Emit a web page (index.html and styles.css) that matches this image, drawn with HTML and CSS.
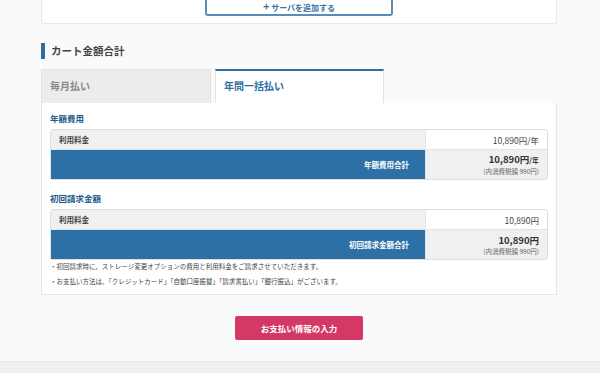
FILE: index.html
```html
<!DOCTYPE html>
<html>
<head>
  <title>カート</title>
  <link rel="stylesheet" href="styles.css">
</head>
<body>
  <div class="page">
    <div class="container">
      <div class="server-card">
        <button class="add-btn"><span class="plus">+</span> サーバを追加する</button>
      </div>

      <h2 class="section-title">カート金額合計</h2>

      <div class="tabs">
        <div class="tab">毎月払い</div>
        <div class="tab active">年間一括払い</div>
      </div>
      <div class="panel">
        <h3 class="sub-title">年額費用</h3>
        <table class="price">
          <tr>
            <th>利用料金</th>
            <td>10,890円/年</td>
          </tr>
          <tr class="total">
            <th>年額費用合計</th>
            <td><b>10,890円<small>/年</small></b><span class="tax">(内消費税額 990円)</span></td>
          </tr>
        </table>

        <h3 class="sub-title">初回請求金額</h3>
        <table class="price last">
          <tr>
            <th>利用料金</th>
            <td>10,890円</td>
          </tr>
          <tr class="total">
            <th>初回請求金額合計</th>
            <td><b>10,890円</b><span class="tax">(内消費税額 990円)</span></td>
          </tr>
        </table>
        <p class="note">・初回請求時に、ストレージ変更オプションの費用と利用料金をご請求させていただきます。</p>
        <p class="note">・お支払い方法は、「クレジットカード」「自動口座振替」「請求書払い」「銀行振込」がございます。</p>
      </div>

      <div class="actions">
        <button class="pay-btn">お支払い情報の入力</button>
      </div>
    </div>
  </div>
  <div class="footer"></div>
</body>
</html>
```

FILE: styles.css
```css
body {
  margin: 0;
  background-color: #f0f0f0;
  color: #333;
  font-family: "Noto Sans CJK JP", "Noto Sans", sans-serif;
  overflow: hidden;
}

.page {
  background-color: #fafafa;
  height: 361px;
  border-bottom: 1px solid #e6e6e6;
  overflow: hidden;
}

.container {
  width: 516px;
  margin-left: 41px;
}

.server-card {
  margin-top: -11px;
  height: 34px;
  background-color: #fff;
  border: 1px solid #e8e8e8;
  border-top: none;
  border-radius: 0 0 3px 3px;
  display: flex;
  justify-content: center;
}

.add-btn {
  width: 188px;
  height: 27px;
  padding: 8px 0 0;
  background-color: #fff;
  border: 2px solid #5a8cbb;
  border-radius: 3px;
  color: #3d73a6;
  font-family: inherit;
  font-size: 8px;
  font-weight: bold;
  line-height: 10px;
}

.plus {
  font-size: 11px;
}

.section-title {
  margin: 19px 0 0;
  height: 16px;
  border-left: 4px solid #2d6ea3;
  padding-left: 6px;
  font-size: 10.5px;
  line-height: 16px;
  font-weight: bold;
  color: #444;
}

.tabs {
  display: flex;
  gap: 4px;
  margin-top: 10px;
}

.tab {
  width: 170px;
  height: 34px;
  box-sizing: border-box;
  padding: 8px 8px 0;
  background-color: #ececec;
  border: 1px solid #e3e3e3;
  border-bottom: none;
  color: #8a8a8a;
  font-size: 10px;
  font-weight: bold;
}

.tab.active {
  width: 169px;
  background-color: #fff;
  border-top: 2px solid #2d6ea3;
  color: #2d6ea3;
  padding-top: 7px;
}

.panel {
  background-color: #fff;
  border: 1px solid #e5e5e5;
  border-top: none;
  padding: 8px 8px 2px;
}

.sub-title {
  margin: 0 0 4px;
  font-size: 8.5px;
  line-height: 14px;
  color: #24578a;
  font-weight: bold;
}

.price {
  width: 100%;
  border-collapse: separate;
  border-spacing: 0;
  border: 1px solid #dedede;
  border-radius: 3px;
  margin-bottom: 11px;
}

.price.last {
  margin-bottom: 2px;
}

.price th {
  height: 19px;
  padding: 0 8px;
  background-color: #f0f0f0;
  text-align: left;
  font-size: 7.5px;
  font-weight: bold;
  color: #444;
  border-bottom: 1px solid #e3e3e3;
}

.price td {
  width: 105px;
  padding: 0 8px;
  text-align: right;
  font-size: 8.5px;
  color: #444;
  border-left: 1px solid #e3e3e3;
  border-bottom: 1px solid #e3e3e3;
}

.price .total th {
  height: 29px;
  background-color: #2c70a5;
  color: #fff;
  text-align: right;
  padding-right: 16px;
  border-bottom: none;
}

.price .total td {
  background-color: #f0f0f0;
  border-bottom: none;
}

.total b {
  display: block;
  font-size: 9.5px;
  line-height: 13px;
  color: #333;
}

.total small {
  font-size: 7px;
}

.tax {
  display: block;
  font-size: 6.5px;
  line-height: 9px;
  color: #666;
}

.note {
  margin: 0 0 6px;
  font-size: 6.5px;
  line-height: 9px;
  color: #444;
}

.actions {
  display: flex;
  justify-content: center;
  padding-top: 21px;
}

.pay-btn {
  width: 128px;
  height: 24px;
  background-color: #d43864;
  border: none;
  border-radius: 2px;
  color: #fff;
  font-family: inherit;
  font-size: 8.5px;
  font-weight: bold;
}

.footer {
  height: 20px;
}
```
